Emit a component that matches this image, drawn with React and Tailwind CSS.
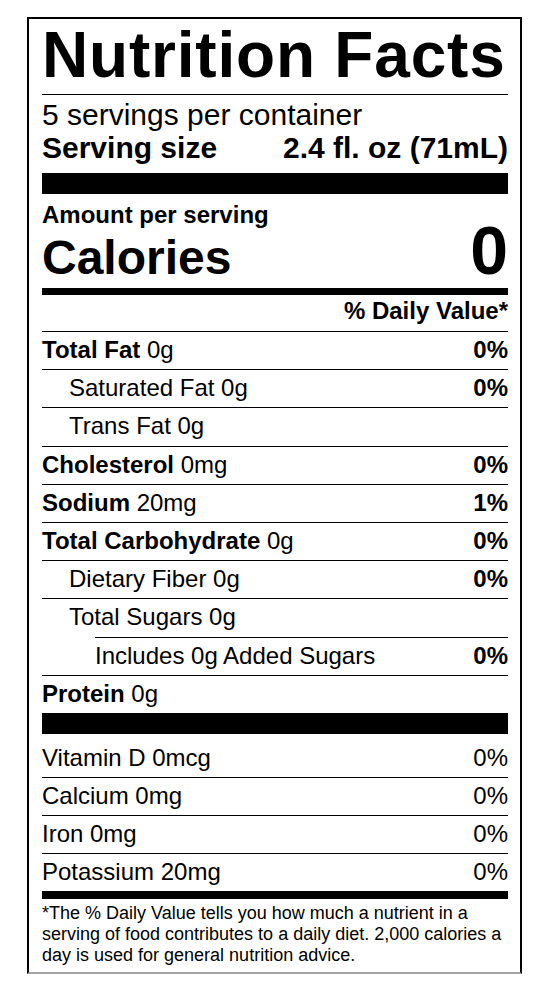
import React from 'react';
import clsx from 'clsx';

const nutrients = [
  { label: 'Total Fat', amount: '0g', dv: '0%', bold: true },
  { label: 'Saturated Fat', amount: '0g', dv: '0%', indent: 1 },
  { label: 'Trans Fat', amount: '0g', indent: 1 },
  { label: 'Cholesterol', amount: '0mg', dv: '0%', bold: true },
  { label: 'Sodium', amount: '20mg', dv: '1%', bold: true },
  { label: 'Total Carbohydrate', amount: '0g', dv: '0%', bold: true },
  { label: 'Dietary Fiber', amount: '0g', dv: '0%', indent: 1 },
  { label: 'Total Sugars', amount: '0g', indent: 1 },
  { label: 'Includes 0g Added Sugars', dv: '0%', indent: 2 },
  { label: 'Protein', amount: '0g', bold: true },
];

const vitamins = [
  { label: 'Vitamin D 0mcg', dv: '0%' },
  { label: 'Calcium 0mg', dv: '0%' },
  { label: 'Iron 0mg', dv: '0%' },
  { label: 'Potassium 20mg', dv: '0%' },
];

function NutrientRow({ label, amount, dv, bold, indent, first }) {
  return (
    <div
      className={clsx(
        'flex justify-between text-[24px] leading-[35px]',
        first ? 'h-[37.2px]' : 'h-[38.2px] border-t border-black',
        indent === 1 && 'pl-[27px]',
        indent === 2 && 'ml-[53px]'
      )}
    >
      <span>
        {bold ? <span className="font-bold">{label}</span> : label}
        {amount && ' ' + amount}
      </span>
      {dv && <span className="font-bold">{dv}</span>}
    </div>
  );
}

function VitaminRow({ label, dv, first }) {
  return (
    <div
      className={clsx(
        'flex justify-between text-[24px] leading-[35px]',
        first ? 'h-[43px] pt-[6px]' : 'h-[38.2px] border-t border-black'
      )}
    >
      <span>{label}</span>
      <span>{dv}</span>
    </div>
  );
}

export default function App() {
  return (
    <div className="min-h-screen bg-white pt-[17px] pl-[27px] font-['Liberation_Sans',Arial,sans-serif] text-black">
      <div className="w-[495px] border-2 border-black border-b-[#a3a3a3] pl-[13px] pr-[12px]">
        <div className="whitespace-nowrap border-b border-black pt-[4px] pb-[7px] text-[64px] font-bold leading-none tracking-[0.8px]">
          Nutrition Facts
        </div>

        <div className="pt-[3px] text-[30px] leading-[33px]">
          <div>5 servings per container</div>
          <div className="flex justify-between font-bold">
            <span>Serving size</span>
            <span>2.4 fl. oz (71mL)</span>
          </div>
        </div>
        <div className="mt-[9px] h-[21px] bg-black" />

        <div className="mt-[8px] text-[24px] font-bold leading-[26px]">Amount per serving</div>
        <div className="flex items-baseline justify-between font-bold">
          <span className="text-[48px] leading-[48px]">Calories</span>
          <span className="text-[68px] leading-[44px]">0</span>
        </div>
        <div className="mt-[6px] h-[7px] bg-black" />

        <div className="border-b border-black pt-[3px] pb-[7px] text-right text-[24px] font-bold leading-[26px]">
          % Daily Value*
        </div>

        {nutrients.map((n, i) => (
          <NutrientRow key={n.label} {...n} first={i === 0} />
        ))}
        <div className="h-[21px] bg-black" />

        {vitamins.map((v, i) => (
          <VitaminRow key={v.label} {...v} first={i === 0} />
        ))}
        <div className="h-[8px] bg-black" />

        <p className="pt-[4px] pb-[6px] text-[18px] leading-[21px]">
          *The % Daily Value tells you how much a nutrient in a serving of food contributes to a daily diet. 2,000
          calories a day is used for general nutrition advice.
        </p>
      </div>
    </div>
  );
}
